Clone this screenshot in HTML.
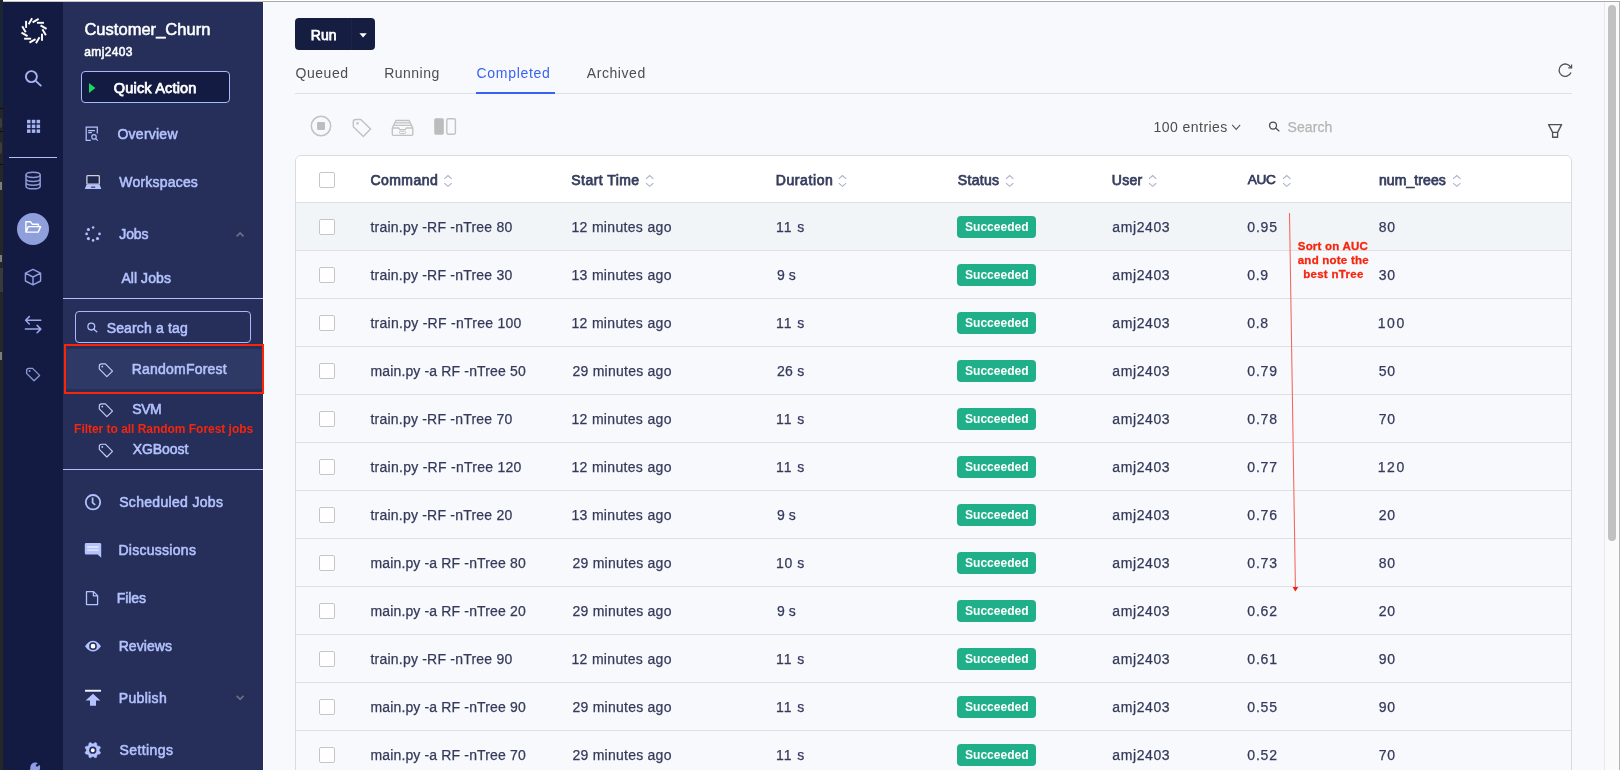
<!DOCTYPE html>
<html lang="en">
<head>
<meta charset="utf-8">
<title>Customer_Churn - Jobs</title>
<style>
html,body{margin:0;padding:0;}
body{width:1620px;height:770px;overflow:hidden;position:relative;background:#f8f9fc;font-family:"Liberation Sans",sans-serif;}
.a{position:absolute;}
.t{position:absolute;line-height:0;white-space:nowrap;}
svg{position:absolute;overflow:visible;}
#strip{left:0;top:0;width:3px;height:770px;background:#262626;}
#strip2{left:0;top:0;width:3px;height:108px;background:#1b2634;}
#rail{left:3px;top:2px;width:60px;height:768px;background:#141b42;}
#side{left:63px;top:2px;width:200px;height:768px;background:#252f5a;}
#topw{left:3px;top:0;width:1617px;height:1px;background:#ffffff;}
#topg{left:3px;top:1px;width:1617px;height:1px;background:#a9a9a9;}
.hr{background:#b1befb;height:1px;}
.row{left:296px;width:1275px;height:47px;border-bottom:1px solid #dfe0e3;}
.cb{width:14px;height:14px;border:1px solid #c6c6c6;border-radius:2px;background:#fff;left:319px;}
.badge{left:957px;width:79px;height:22px;border-radius:4px;background:#1fb089;}
</style>
</head>
<body>
<div class="a" id="strip"></div>
<div class="a" id="strip2"></div>
<div class="a" style="left:0;top:108px;width:3px;height:1px;background:#0d0d0d;"></div>
<div class="a" style="left:0;top:131px;width:3px;height:1px;background:#0d0d0d;"></div>
<div class="a" style="left:0;top:164px;width:3px;height:1px;background:#0d0d0d;"></div>
<div class="a" style="left:0;top:118px;width:2px;height:10px;background:#3c3c3c;border-radius:0 2px 2px 0;"></div>
<div class="a" style="left:0;top:142px;width:2px;height:12px;background:#3c3c3c;border-radius:0 2px 2px 0;"></div>
<div class="a" style="left:0;top:268px;width:3px;height:24px;background:#3a3a3a;"></div>
<div class="a" style="left:0;top:182px;width:2px;height:8px;background:#7d7d7d;"></div>
<div class="a" style="left:0;top:255px;width:2px;height:7px;background:#7d7d7d;"></div>
<div class="a" style="left:0;top:352px;width:2px;height:8px;background:#7d7d7d;"></div>
<div class="a" id="rail"></div>
<div class="a" id="side"></div>
<div class="a" id="topw"></div>
<div class="a" id="topg"></div>
<div class="a" style="left:3px;top:1px;width:260px;height:1px;background:#c6c4c2;"></div>
<div class="a" style="left:263px;top:2px;width:1px;height:768px;background:#ffffff;"></div>

<!-- rail -->
<div class="a hr" style="left:9px;top:157px;width:48px;"></div>
<div class="a" style="left:17px;top:213px;width:32px;height:32px;border-radius:16px;background:#8f9fdc;"></div>

<!-- sidebar -->
<div class="a" style="left:81px;top:71px;width:147px;height:30px;border:1px solid #a9b8fa;border-radius:4px;background:#141b42;"></div>
<div class="a hr" style="left:63px;top:298px;width:200px;"></div>
<div class="a" style="left:75px;top:311px;width:174px;height:30px;border:1px solid #a9b8fa;border-radius:4px;"></div>
<div class="a" style="left:66px;top:349px;width:197px;height:40px;background:#2f3966;"></div>
<div class="a" style="left:64px;top:344px;width:196px;height:46px;border:2px solid #fa2509;"></div>
<div class="a hr" style="left:63px;top:469px;width:200px;"></div>

<!-- main -->
<div class="a" style="left:295px;top:18px;width:80px;height:32px;border-radius:4px;background:#151d41;"></div>
<div class="a" style="left:295px;top:93px;width:1277px;height:1px;background:#e0e1e5;"></div>
<div class="a" style="left:476px;top:92px;width:79px;height:2px;background:#3a62f2;"></div>

<!-- table -->
<div class="a" style="left:295px;top:155px;width:1275px;height:640px;border:1px solid #dadbde;border-radius:6px 6px 0 0;background:#f8f9fc;"></div>
<div class="a" style="left:296px;top:156px;width:1275px;height:46px;border-bottom:1px solid #dfe0e3;background:#ffffff;border-radius:5px 5px 0 0;"></div>
<div class="a cb" style="top:172px;"></div>
<div class="a row" style="top:203px;background:#f2f5f8;"></div>
<div class="a cb" style="top:219px;"></div>
<div class="a badge" style="top:216px;"></div>
<div class="a row" style="top:251px;"></div>
<div class="a cb" style="top:267px;"></div>
<div class="a badge" style="top:264px;"></div>
<div class="a row" style="top:299px;"></div>
<div class="a cb" style="top:315px;"></div>
<div class="a badge" style="top:312px;"></div>
<div class="a row" style="top:347px;"></div>
<div class="a cb" style="top:363px;"></div>
<div class="a badge" style="top:360px;"></div>
<div class="a row" style="top:395px;"></div>
<div class="a cb" style="top:411px;"></div>
<div class="a badge" style="top:408px;"></div>
<div class="a row" style="top:443px;"></div>
<div class="a cb" style="top:459px;"></div>
<div class="a badge" style="top:456px;"></div>
<div class="a row" style="top:491px;"></div>
<div class="a cb" style="top:507px;"></div>
<div class="a badge" style="top:504px;"></div>
<div class="a row" style="top:539px;"></div>
<div class="a cb" style="top:555px;"></div>
<div class="a badge" style="top:552px;"></div>
<div class="a row" style="top:587px;"></div>
<div class="a cb" style="top:603px;"></div>
<div class="a badge" style="top:600px;"></div>
<div class="a row" style="top:635px;"></div>
<div class="a cb" style="top:651px;"></div>
<div class="a badge" style="top:648px;"></div>
<div class="a row" style="top:683px;"></div>
<div class="a cb" style="top:699px;"></div>
<div class="a badge" style="top:696px;"></div>
<div class="a row" style="top:731px;"></div>
<div class="a cb" style="top:747px;"></div>
<div class="a badge" style="top:744px;"></div>

<!-- scrollbar -->
<div class="a" style="left:1604px;top:2px;width:15px;height:768px;background:#fafafa;border-left:1px solid #e8e8e8;box-sizing:border-box;"></div>
<div class="a" style="left:1608px;top:5px;width:8px;height:536px;border-radius:4px;background:#c1c1c1;"></div>
<div class="a" style="left:1619px;top:1px;width:1px;height:769px;background:#b5b5b5;"></div>

<svg class="a" style="left:0;top:0" width="1620" height="770" viewBox="0 0 1620 770" ><line x1="36.95" y1="22.80" x2="43.95" y2="22.80" stroke="#fff" stroke-width="1.9"/><line x1="40.54" y1="25.32" x2="46.60" y2="28.82" stroke="#fff" stroke-width="1.9"/><line x1="42.38" y1="29.29" x2="45.88" y2="35.35" stroke="#fff" stroke-width="1.9"/><line x1="42.00" y1="33.65" x2="42.00" y2="40.65" stroke="#fff" stroke-width="1.9"/><line x1="39.48" y1="37.24" x2="35.98" y2="43.30" stroke="#fff" stroke-width="1.9"/><line x1="35.51" y1="39.08" x2="29.45" y2="42.58" stroke="#fff" stroke-width="1.9"/><line x1="31.15" y1="38.70" x2="24.15" y2="38.70" stroke="#fff" stroke-width="1.9"/><line x1="27.56" y1="36.18" x2="21.50" y2="32.68" stroke="#fff" stroke-width="1.9"/><line x1="25.72" y1="32.21" x2="22.22" y2="26.15" stroke="#fff" stroke-width="1.9"/><line x1="26.10" y1="27.85" x2="26.10" y2="20.85" stroke="#fff" stroke-width="1.9"/><line x1="28.62" y1="24.26" x2="32.12" y2="18.20" stroke="#fff" stroke-width="1.9"/><line x1="32.59" y1="22.42" x2="38.65" y2="18.92" stroke="#fff" stroke-width="1.9"/><circle cx="31.4" cy="76.6" r="5.5" fill="none" stroke="#a5b3f0" stroke-width="1.9"/><line x1="35.4" y1="80.6" x2="40.8" y2="85.6" stroke="#a5b3f0" stroke-width="1.9" stroke-linecap="round"/><rect x="27.0" y="119.8" width="3.5" height="3.5" fill="#a5b3f0"/><rect x="27.0" y="124.6" width="3.5" height="3.5" fill="#a5b3f0"/><rect x="27.0" y="129.4" width="3.5" height="3.5" fill="#a5b3f0"/><rect x="31.8" y="119.8" width="3.5" height="3.5" fill="#a5b3f0"/><rect x="31.8" y="124.6" width="3.5" height="3.5" fill="#a5b3f0"/><rect x="31.8" y="129.4" width="3.5" height="3.5" fill="#a5b3f0"/><rect x="36.6" y="119.8" width="3.5" height="3.5" fill="#a5b3f0"/><rect x="36.6" y="124.6" width="3.5" height="3.5" fill="#a5b3f0"/><rect x="36.6" y="129.4" width="3.5" height="3.5" fill="#a5b3f0"/><ellipse cx="33.1" cy="174.8" rx="7.1" ry="2.6" fill="none" stroke="#8b98d4" stroke-width="1.5"/><path d="M26,174.8 V186.2 A7.1,2.6 0 0 0 40.2,186.2 V174.8 M26,178.8 A7.1,2.6 0 0 0 40.2,178.8 M26,182.6 A7.1,2.6 0 0 0 40.2,182.6" fill="none" stroke="#8b98d4" stroke-width="1.5"/><path d="M25.9,232.1 V221.8 H30.6 L32.2,224.2 H38.4 V226.4 M25.9,232.1 L28.3,226.6 H40.6 L38.2,232.1 Z" fill="none" stroke="#fff" stroke-width="1.4" stroke-linejoin="round"/><path d="M33,269.4 L40.6,273.2 V281 L33,284.8 L25.4,281 V273.2 Z M25.4,273.2 L33,277 L40.6,273.2 M33,277 V284.8" fill="none" stroke="#909ee0" stroke-width="1.4" stroke-linejoin="round"/><path d="M40.8,320.3 H26 M29.3,316.6 L25.6,320.3 L29.3,324 M25.4,329.1 H40.4 M37.1,325.4 L40.8,329.1 L37.1,332.8" fill="none" stroke="#9aa8e8" stroke-width="1.5" stroke-linecap="round" stroke-linejoin="round"/><path d="M26.60,370.64 Q26.60,368.40 28.83,368.40 L32.59,368.40 L39.60,375.41 L34.01,380.80 L26.60,373.38 Z" fill="none" stroke="#8b98d4" stroke-width="1.3" stroke-linejoin="round"/><circle cx="29.55" cy="371.04" r="1.0" fill="#8b98d4"/><circle cx="35.2" cy="767.4" r="4.9" fill="#8f9ee6"/><line x1="33" y1="769.5" x2="26" y2="777" stroke="#8f9ee6" stroke-width="4.4"/><line x1="36.3" y1="766.2" x2="42" y2="760.8" stroke="#141b42" stroke-width="2.3"/><path d="M89,83 L95.4,88 L89,93 Z" fill="#1ed760"/><path d="M97.3,133.6 V127.2 H86.2 V140.3 H90.8 M88.2,130.5 H94.9 M88.2,132.7 H91.9" fill="none" stroke="#b4c2fd" stroke-width="1.25"/><circle cx="94" cy="136.9" r="2.2" fill="none" stroke="#b4c2fd" stroke-width="1.2"/><line x1="95.7" y1="138.6" x2="97.8" y2="140.6" stroke="#b4c2fd" stroke-width="1.2"/><rect x="86.9" y="175.6" width="12.4" height="8.6" rx="0.8" fill="#1f2850" stroke="#cfcfd4" stroke-width="1.3"/><path d="M86.6,184.6 H99.6 L101.3,189 H84.8 Z" fill="#b4c2fd"/><rect x="91" y="186.6" width="4.2" height="1.1" fill="#252f5a"/><circle cx="93.1" cy="227.5" r="1.25" fill="#b4c2fd"/><circle cx="88.4" cy="229.5" r="1.55" fill="#b4c2fd"/><circle cx="86.6" cy="233.9" r="1.35" fill="#b4c2fd"/><circle cx="88.4" cy="238.6" r="1.55" fill="#b4c2fd"/><circle cx="93.1" cy="240.4" r="1.3" fill="#b4c2fd"/><circle cx="97.5" cy="238.6" r="1.55" fill="#b4c2fd"/><circle cx="99.5" cy="233.9" r="1.3" fill="#b4c2fd"/><path d="M236.7,236.4 L240.1,233.0 L243.5,236.4" fill="none" stroke="#6f7080" stroke-width="1.7"/><path d="M236.7,695.9 L240.1,699.3 L243.5,695.9" fill="none" stroke="#6f7080" stroke-width="1.7"/><circle cx="91.3" cy="326.6" r="3.4" fill="none" stroke="#b4c2fd" stroke-width="1.3"/><line x1="93.8" y1="329.2" x2="96.8" y2="331.8" stroke="#b4c2fd" stroke-width="1.3" stroke-linecap="round"/><path d="M99.30,366.11 Q99.30,363.80 101.57,363.80 L105.38,363.80 L112.50,371.04 L106.83,376.60 L99.30,368.94 Z" fill="none" stroke="#c3cdfb" stroke-width="1.15" stroke-linejoin="round"/><circle cx="102.29" cy="366.53" r="0.9" fill="#c3cdfb"/><path d="M99.30,406.11 Q99.30,403.80 101.57,403.80 L105.38,403.80 L112.50,411.04 L106.83,416.60 L99.30,408.94 Z" fill="none" stroke="#c3cdfb" stroke-width="1.15" stroke-linejoin="round"/><circle cx="102.29" cy="406.53" r="0.9" fill="#c3cdfb"/><path d="M99.30,446.51 Q99.30,444.20 101.57,444.20 L105.38,444.20 L112.50,451.44 L106.83,457.00 L99.30,449.34 Z" fill="none" stroke="#c3cdfb" stroke-width="1.15" stroke-linejoin="round"/><circle cx="102.29" cy="446.93" r="0.9" fill="#c3cdfb"/><circle cx="93" cy="502.2" r="7.2" fill="none" stroke="#b4c2fd" stroke-width="1.8"/><path d="M92.6,497.6 V502.6 L95.2,505" fill="none" stroke="#b4c2fd" stroke-width="1.7"/><path d="M86.2,543 H99.8 Q101.2,543 101.2,544.4 V557.8 L97.6,554.6 H86.2 Q84.8,554.6 84.8,553.2 V544.4 Q84.8,543 86.2,543 Z" fill="#b4c2fd"/><path d="M87.2,547 H98.6 M87.2,550.2 H98.6" stroke="#e8ecff" stroke-width="1.3"/><path d="M86.5,591.6 H93.6 L97.6,595.6 V604.6 H86.5 Z M93.4,591.8 V595.8 H97.4" fill="none" stroke="#b4c2fd" stroke-width="1.3" stroke-linejoin="round"/><path d="M85,646.2 Q93,635.4 101,646.2 Q93,657 85,646.2 Z" fill="#b4c2fd"/><circle cx="93" cy="646.2" r="3.1" fill="#fff" stroke="#252f5a" stroke-width="1.5"/><rect x="85" y="689.8" width="16" height="1.9" fill="#f2f4ff"/><path d="M93,693.8 L100.4,700.6 H96 V705.8 H90 V700.6 H85.6 Z" fill="#b4c2fd"/><polygon points="100.46,752.52 99.86,753.97 97.75,754.26 96.86,755.15 96.57,757.26 95.12,757.86 93.43,756.57 92.17,756.57 90.48,757.86 89.03,757.26 88.74,755.15 87.85,754.26 85.74,753.97 85.14,752.52 86.43,750.83 86.43,749.57 85.14,747.88 85.74,746.43 87.85,746.14 88.74,745.25 89.03,743.14 90.48,742.54 92.17,743.83 93.43,743.83 95.12,742.54 96.57,743.14 96.86,745.25 97.75,746.14 99.86,746.43 100.46,747.88 99.17,749.57 99.17,750.83" fill="#b4c2fd" stroke="#b4c2fd" stroke-width="0.6" stroke-linejoin="round"/><circle cx="92.8" cy="750.2" r="2.8" fill="#fff" stroke="#252f5a" stroke-width="1.7"/><path d="M359.4,33.2 H366.8 L363.1,37.6 Z" fill="#fff"/><rect x="351" y="18" width="1" height="32" fill="#1a2348"/><circle cx="321" cy="126" r="9.7" fill="none" stroke="#c2c2c2" stroke-width="1.5"/><rect x="317" y="122" width="8" height="8" rx="1.2" fill="#bdbdbd"/><path d="M353.3,122 Q353.3,119.5 355.8,119.5 L360.8,119.5 L370.6,128.9 L363.3,136.4 L353.3,126.8 Z" fill="none" stroke="#c2c2c2" stroke-width="1.45" stroke-linejoin="round"/><rect x="356.3" y="122.1" width="2.4" height="2.4" fill="#c4c4c4"/><path d="M392.3,128 L395.9,120.5 H409.2 L412.8,128 V134.3 Q412.8,135.4 411.7,135.4 H393.4 Q392.3,135.4 392.3,134.3 Z M392.3,128 H398.8 L399.8,129.6 H405.3 L406.3,128 H412.8 M394.9,122.9 H410.2 M393.8,125.4 H411.3" fill="none" stroke="#c2c2c2" stroke-width="1.35" stroke-linejoin="round"/><rect x="399.4" y="131.3" width="6.3" height="2.3" rx="1.1" fill="none" stroke="#c2c2c2" stroke-width="1"/><rect x="434.2" y="118.2" width="9.6" height="16.5" rx="1.6" fill="#bcbcbc"/><rect x="446.8" y="118.8" width="8.6" height="15.4" rx="1.4" fill="none" stroke="#c2c2c2" stroke-width="1.4"/><path d="M444.3,178.8 L448.0,175.6 L451.7,178.8 M444.3,183.1 L448.0,186.3 L451.7,183.1" fill="none" stroke="#aab1cc" stroke-width="1.1"/><path d="M646.0,178.8 L649.7,175.6 L653.4,178.8 M646.0,183.1 L649.7,186.3 L653.4,183.1" fill="none" stroke="#aab1cc" stroke-width="1.1"/><path d="M838.8,178.8 L842.5,175.6 L846.2,178.8 M838.8,183.1 L842.5,186.3 L846.2,183.1" fill="none" stroke="#aab1cc" stroke-width="1.1"/><path d="M1006.0,178.8 L1009.7,175.6 L1013.4,178.8 M1006.0,183.1 L1009.7,186.3 L1013.4,183.1" fill="none" stroke="#aab1cc" stroke-width="1.1"/><path d="M1149.0,178.8 L1152.7,175.6 L1156.4,178.8 M1149.0,183.1 L1152.7,186.3 L1156.4,183.1" fill="none" stroke="#aab1cc" stroke-width="1.1"/><path d="M1283.1,178.8 L1286.8,175.6 L1290.5,178.8 M1283.1,183.1 L1286.8,186.3 L1290.5,183.1" fill="none" stroke="#aab1cc" stroke-width="1.1"/><path d="M1453.1,178.8 L1456.8,175.6 L1460.5,178.8 M1453.1,183.1 L1456.8,186.3 L1460.5,183.1" fill="none" stroke="#aab1cc" stroke-width="1.1"/><path d="M1232.2,124.8 L1236.2,129.4 L1240.2,124.8" fill="none" stroke="#555" stroke-width="1.05"/><circle cx="1273" cy="125.5" r="3.5" fill="none" stroke="#4a4a4a" stroke-width="1.25"/><line x1="1275.6" y1="128" x2="1279" y2="130.9" stroke="#4a4a4a" stroke-width="1.25" stroke-linecap="round"/><path d="M1570.8,67.4 A6.2,6.2 0 1 0 1571,72.6" fill="none" stroke="#505050" stroke-width="1.3"/><path d="M1571.6,64.6 V67.9 H1568.3" fill="none" stroke="#505050" stroke-width="1.2"/><path d="M1548.6,124.6 H1561.6 L1557.6,132.4 V137.2 H1552.6 V132.4 Z M1552.6,132.4 H1557.6" fill="none" stroke="#4f4f4f" stroke-width="1.35" stroke-linejoin="round"/><line x1="1289.5" y1="213" x2="1295.4" y2="587.5" stroke="#f66358" stroke-width="1.05"/><path d="M1292.6,587 H1298.3 L1295.4,591.6 Z" fill="#f3200a"/></svg>
<div class="a" id="tx" style="left:0;top:0;width:1620px;height:770px;will-change:transform;">
<div class="t" style="left:84.41px;top:29.28px;font-size:16.5px;letter-spacing:0.025px;color:#ffffff;-webkit-text-stroke:0.55px;">Customer_Churn</div>
<div class="t" style="left:84.31px;top:51.84px;font-size:12px;letter-spacing:0.370px;color:#ffffff;-webkit-text-stroke:0.55px;">amj2403</div>
<div class="t" style="left:113.85px;top:87.98px;font-size:14.5px;letter-spacing:0.179px;color:#ffffff;-webkit-text-stroke:0.75px;">Quick Action</div>
<div class="t" style="left:117.51px;top:134.15px;font-size:14px;letter-spacing:0.235px;color:#b4c2fd;-webkit-text-stroke:0.55px;">Overview</div>
<div class="t" style="left:119.31px;top:182.15px;font-size:14px;letter-spacing:0.201px;color:#b4c2fd;-webkit-text-stroke:0.55px;">Workspaces</div>
<div class="t" style="left:119.31px;top:234.15px;font-size:14px;letter-spacing:-0.131px;color:#b4c2fd;-webkit-text-stroke:0.55px;">Jobs</div>
<div class="t" style="left:121.41px;top:278.15px;font-size:14px;letter-spacing:0.066px;color:#b4c2fd;-webkit-text-stroke:0.55px;">All Jobs</div>
<div class="t" style="left:106.71px;top:328.15px;font-size:14px;letter-spacing:0.144px;color:#b4c2fd;-webkit-text-stroke:0.55px;">Search a tag</div>
<div class="t" style="left:131.71px;top:369.15px;font-size:14px;letter-spacing:0.216px;color:#b4c2fd;-webkit-text-stroke:0.55px;">RandomForest</div>
<div class="t" style="left:132.31px;top:409.15px;font-size:14px;letter-spacing:-0.448px;color:#b4c2fd;-webkit-text-stroke:0.55px;">SVM</div>
<div class="t" style="left:74.10px;top:428.54px;font-size:12px;letter-spacing:-0.030px;color:#f8250c;font-weight:700;">Filter to all Random Forest jobs</div>
<div class="t" style="left:132.71px;top:449.15px;font-size:14px;letter-spacing:-0.060px;color:#b4c2fd;-webkit-text-stroke:0.55px;">XGBoost</div>
<div class="t" style="left:119.21px;top:502.15px;font-size:14px;letter-spacing:0.312px;color:#b4c2fd;-webkit-text-stroke:0.55px;">Scheduled Jobs</div>
<div class="t" style="left:118.41px;top:550.15px;font-size:14px;letter-spacing:0.279px;color:#b4c2fd;-webkit-text-stroke:0.55px;">Discussions</div>
<div class="t" style="left:116.71px;top:598.15px;font-size:14px;letter-spacing:-0.045px;color:#b4c2fd;-webkit-text-stroke:0.55px;">Files</div>
<div class="t" style="left:118.71px;top:646.15px;font-size:14px;letter-spacing:0.046px;color:#b4c2fd;-webkit-text-stroke:0.55px;">Reviews</div>
<div class="t" style="left:118.71px;top:698.15px;font-size:14px;letter-spacing:0.342px;color:#b4c2fd;-webkit-text-stroke:0.55px;">Publish</div>
<div class="t" style="left:119.51px;top:750.15px;font-size:14px;letter-spacing:0.399px;color:#b4c2fd;-webkit-text-stroke:0.55px;">Settings</div>
<div class="t" style="left:310.65px;top:34.86px;font-size:13.96px;letter-spacing:0.182px;color:#ffffff;-webkit-text-stroke:0.75px;">Run</div>
<div class="t" style="left:295.50px;top:73.15px;font-size:14px;letter-spacing:0.533px;color:#4d4d4d;">Queued</div>
<div class="t" style="left:384.20px;top:73.15px;font-size:14px;letter-spacing:0.489px;color:#4d4d4d;">Running</div>
<div class="t" style="left:476.50px;top:73.15px;font-size:14px;letter-spacing:0.710px;color:#3a62f2;">Completed</div>
<div class="t" style="left:586.80px;top:73.15px;font-size:14px;letter-spacing:0.560px;color:#4d4d4d;">Archived</div>
<div class="t" style="left:1153.60px;top:127.15px;font-size:14px;letter-spacing:0.443px;color:#4d4d4d;">100 entries</div>
<div class="t" style="left:1287.55px;top:127.15px;font-size:14px;letter-spacing:0.066px;color:#b4b4b4;-webkit-text-stroke:0.25px;">Search</div>
<div class="t" style="left:370.45px;top:180.15px;font-size:14px;letter-spacing:0.451px;color:#363d5e;-webkit-text-stroke:0.75px;">Command</div>
<div class="t" style="left:571.35px;top:180.15px;font-size:14px;letter-spacing:0.438px;color:#363d5e;-webkit-text-stroke:0.75px;">Start Time</div>
<div class="t" style="left:775.75px;top:180.15px;font-size:14px;letter-spacing:0.596px;color:#363d5e;-webkit-text-stroke:0.75px;">Duration</div>
<div class="t" style="left:957.85px;top:180.15px;font-size:14px;letter-spacing:0.302px;color:#363d5e;-webkit-text-stroke:0.75px;">Status</div>
<div class="t" style="left:1111.85px;top:180.15px;font-size:14px;letter-spacing:0.268px;color:#363d5e;-webkit-text-stroke:0.75px;">User</div>
<div class="t" style="left:1247.85px;top:180.28px;font-size:13.62px;letter-spacing:-0.353px;color:#363d5e;-webkit-text-stroke:0.75px;">AUC</div>
<div class="t" style="left:1378.95px;top:180.15px;font-size:14px;letter-spacing:0.094px;color:#363d5e;-webkit-text-stroke:0.75px;">num_trees</div>
<div class="t" style="left:370.45px;top:227.15px;font-size:14px;letter-spacing:0.219px;color:#343a5a;-webkit-text-stroke:0.25px;">train.py -RF -nTree 80</div>
<div class="t" style="left:571.45px;top:227.15px;font-size:14px;letter-spacing:0.327px;color:#343a5a;-webkit-text-stroke:0.25px;">12 minutes ago</div>
<div class="t" style="left:776.05px;top:227.15px;font-size:14px;letter-spacing:0.959px;color:#343a5a;-webkit-text-stroke:0.25px;">11 s</div>
<div class="t" style="left:965.00px;top:226.84px;font-size:12px;letter-spacing:0.033px;color:#ffffff;font-weight:700;">Succeeded</div>
<div class="t" style="left:1112.35px;top:227.15px;font-size:14px;letter-spacing:0.597px;color:#343a5a;-webkit-text-stroke:0.25px;">amj2403</div>
<div class="t" style="left:1247.35px;top:227.15px;font-size:14px;letter-spacing:0.779px;color:#343a5a;-webkit-text-stroke:0.25px;">0.95</div>
<div class="t" style="left:1378.75px;top:227.15px;font-size:14px;letter-spacing:0.814px;color:#343a5a;-webkit-text-stroke:0.25px;">80</div>
<div class="t" style="left:370.45px;top:275.15px;font-size:14px;letter-spacing:0.219px;color:#343a5a;-webkit-text-stroke:0.25px;">train.py -RF -nTree 30</div>
<div class="t" style="left:571.45px;top:275.15px;font-size:14px;letter-spacing:0.327px;color:#343a5a;-webkit-text-stroke:0.25px;">13 minutes ago</div>
<div class="t" style="left:777.05px;top:275.15px;font-size:14px;letter-spacing:0.012px;color:#343a5a;-webkit-text-stroke:0.25px;">9 s</div>
<div class="t" style="left:965.00px;top:274.84px;font-size:12px;letter-spacing:0.033px;color:#ffffff;font-weight:700;">Succeeded</div>
<div class="t" style="left:1112.35px;top:275.15px;font-size:14px;letter-spacing:0.597px;color:#343a5a;-webkit-text-stroke:0.25px;">amj2403</div>
<div class="t" style="left:1247.35px;top:275.15px;font-size:14px;letter-spacing:0.612px;color:#343a5a;-webkit-text-stroke:0.25px;">0.9</div>
<div class="t" style="left:1378.75px;top:275.15px;font-size:14px;letter-spacing:0.814px;color:#343a5a;-webkit-text-stroke:0.25px;">30</div>
<div class="t" style="left:370.45px;top:323.15px;font-size:14px;letter-spacing:0.269px;color:#343a5a;-webkit-text-stroke:0.25px;">train.py -RF -nTree 100</div>
<div class="t" style="left:571.45px;top:323.15px;font-size:14px;letter-spacing:0.327px;color:#343a5a;-webkit-text-stroke:0.25px;">12 minutes ago</div>
<div class="t" style="left:776.05px;top:323.15px;font-size:14px;letter-spacing:0.959px;color:#343a5a;-webkit-text-stroke:0.25px;">11 s</div>
<div class="t" style="left:965.00px;top:322.84px;font-size:12px;letter-spacing:0.033px;color:#ffffff;font-weight:700;">Succeeded</div>
<div class="t" style="left:1112.35px;top:323.15px;font-size:14px;letter-spacing:0.597px;color:#343a5a;-webkit-text-stroke:0.25px;">amj2403</div>
<div class="t" style="left:1247.35px;top:323.15px;font-size:14px;letter-spacing:0.612px;color:#343a5a;-webkit-text-stroke:0.25px;">0.8</div>
<div class="t" style="left:1377.75px;top:323.15px;font-size:14px;letter-spacing:1.564px;color:#343a5a;-webkit-text-stroke:0.25px;">100</div>
<div class="t" style="left:370.45px;top:371.15px;font-size:14px;letter-spacing:0.150px;color:#343a5a;-webkit-text-stroke:0.25px;">main.py -a RF -nTree 50</div>
<div class="t" style="left:572.45px;top:371.15px;font-size:14px;letter-spacing:0.250px;color:#343a5a;-webkit-text-stroke:0.25px;">29 minutes ago</div>
<div class="t" style="left:777.05px;top:371.15px;font-size:14px;letter-spacing:0.279px;color:#343a5a;-webkit-text-stroke:0.25px;">26 s</div>
<div class="t" style="left:965.00px;top:370.84px;font-size:12px;letter-spacing:0.033px;color:#ffffff;font-weight:700;">Succeeded</div>
<div class="t" style="left:1112.35px;top:371.15px;font-size:14px;letter-spacing:0.597px;color:#343a5a;-webkit-text-stroke:0.25px;">amj2403</div>
<div class="t" style="left:1247.35px;top:371.15px;font-size:14px;letter-spacing:0.779px;color:#343a5a;-webkit-text-stroke:0.25px;">0.79</div>
<div class="t" style="left:1378.75px;top:371.15px;font-size:14px;letter-spacing:0.814px;color:#343a5a;-webkit-text-stroke:0.25px;">50</div>
<div class="t" style="left:370.45px;top:419.15px;font-size:14px;letter-spacing:0.219px;color:#343a5a;-webkit-text-stroke:0.25px;">train.py -RF -nTree 70</div>
<div class="t" style="left:571.45px;top:419.15px;font-size:14px;letter-spacing:0.327px;color:#343a5a;-webkit-text-stroke:0.25px;">12 minutes ago</div>
<div class="t" style="left:776.05px;top:419.15px;font-size:14px;letter-spacing:0.959px;color:#343a5a;-webkit-text-stroke:0.25px;">11 s</div>
<div class="t" style="left:965.00px;top:418.84px;font-size:12px;letter-spacing:0.033px;color:#ffffff;font-weight:700;">Succeeded</div>
<div class="t" style="left:1112.35px;top:419.15px;font-size:14px;letter-spacing:0.597px;color:#343a5a;-webkit-text-stroke:0.25px;">amj2403</div>
<div class="t" style="left:1247.35px;top:419.15px;font-size:14px;letter-spacing:0.779px;color:#343a5a;-webkit-text-stroke:0.25px;">0.78</div>
<div class="t" style="left:1378.75px;top:419.15px;font-size:14px;letter-spacing:0.814px;color:#343a5a;-webkit-text-stroke:0.25px;">70</div>
<div class="t" style="left:370.45px;top:467.15px;font-size:14px;letter-spacing:0.269px;color:#343a5a;-webkit-text-stroke:0.25px;">train.py -RF -nTree 120</div>
<div class="t" style="left:571.45px;top:467.15px;font-size:14px;letter-spacing:0.327px;color:#343a5a;-webkit-text-stroke:0.25px;">12 minutes ago</div>
<div class="t" style="left:776.05px;top:467.15px;font-size:14px;letter-spacing:0.959px;color:#343a5a;-webkit-text-stroke:0.25px;">11 s</div>
<div class="t" style="left:965.00px;top:466.84px;font-size:12px;letter-spacing:0.033px;color:#ffffff;font-weight:700;">Succeeded</div>
<div class="t" style="left:1112.35px;top:467.15px;font-size:14px;letter-spacing:0.597px;color:#343a5a;-webkit-text-stroke:0.25px;">amj2403</div>
<div class="t" style="left:1247.35px;top:467.15px;font-size:14px;letter-spacing:0.779px;color:#343a5a;-webkit-text-stroke:0.25px;">0.77</div>
<div class="t" style="left:1377.75px;top:467.15px;font-size:14px;letter-spacing:1.564px;color:#343a5a;-webkit-text-stroke:0.25px;">120</div>
<div class="t" style="left:370.45px;top:515.15px;font-size:14px;letter-spacing:0.219px;color:#343a5a;-webkit-text-stroke:0.25px;">train.py -RF -nTree 20</div>
<div class="t" style="left:571.45px;top:515.15px;font-size:14px;letter-spacing:0.327px;color:#343a5a;-webkit-text-stroke:0.25px;">13 minutes ago</div>
<div class="t" style="left:777.05px;top:515.15px;font-size:14px;letter-spacing:0.012px;color:#343a5a;-webkit-text-stroke:0.25px;">9 s</div>
<div class="t" style="left:965.00px;top:514.84px;font-size:12px;letter-spacing:0.033px;color:#ffffff;font-weight:700;">Succeeded</div>
<div class="t" style="left:1112.35px;top:515.15px;font-size:14px;letter-spacing:0.597px;color:#343a5a;-webkit-text-stroke:0.25px;">amj2403</div>
<div class="t" style="left:1247.35px;top:515.15px;font-size:14px;letter-spacing:0.779px;color:#343a5a;-webkit-text-stroke:0.25px;">0.76</div>
<div class="t" style="left:1378.75px;top:515.15px;font-size:14px;letter-spacing:0.814px;color:#343a5a;-webkit-text-stroke:0.25px;">20</div>
<div class="t" style="left:370.45px;top:563.15px;font-size:14px;letter-spacing:0.150px;color:#343a5a;-webkit-text-stroke:0.25px;">main.py -a RF -nTree 80</div>
<div class="t" style="left:572.45px;top:563.15px;font-size:14px;letter-spacing:0.250px;color:#343a5a;-webkit-text-stroke:0.25px;">29 minutes ago</div>
<div class="t" style="left:776.05px;top:563.15px;font-size:14px;letter-spacing:0.613px;color:#343a5a;-webkit-text-stroke:0.25px;">10 s</div>
<div class="t" style="left:965.00px;top:562.84px;font-size:12px;letter-spacing:0.033px;color:#ffffff;font-weight:700;">Succeeded</div>
<div class="t" style="left:1112.35px;top:563.15px;font-size:14px;letter-spacing:0.597px;color:#343a5a;-webkit-text-stroke:0.25px;">amj2403</div>
<div class="t" style="left:1247.35px;top:563.15px;font-size:14px;letter-spacing:0.779px;color:#343a5a;-webkit-text-stroke:0.25px;">0.73</div>
<div class="t" style="left:1378.75px;top:563.15px;font-size:14px;letter-spacing:0.814px;color:#343a5a;-webkit-text-stroke:0.25px;">80</div>
<div class="t" style="left:370.45px;top:611.15px;font-size:14px;letter-spacing:0.150px;color:#343a5a;-webkit-text-stroke:0.25px;">main.py -a RF -nTree 20</div>
<div class="t" style="left:572.45px;top:611.15px;font-size:14px;letter-spacing:0.250px;color:#343a5a;-webkit-text-stroke:0.25px;">29 minutes ago</div>
<div class="t" style="left:777.05px;top:611.15px;font-size:14px;letter-spacing:0.012px;color:#343a5a;-webkit-text-stroke:0.25px;">9 s</div>
<div class="t" style="left:965.00px;top:610.84px;font-size:12px;letter-spacing:0.033px;color:#ffffff;font-weight:700;">Succeeded</div>
<div class="t" style="left:1112.35px;top:611.15px;font-size:14px;letter-spacing:0.597px;color:#343a5a;-webkit-text-stroke:0.25px;">amj2403</div>
<div class="t" style="left:1247.35px;top:611.15px;font-size:14px;letter-spacing:0.779px;color:#343a5a;-webkit-text-stroke:0.25px;">0.62</div>
<div class="t" style="left:1378.75px;top:611.15px;font-size:14px;letter-spacing:0.814px;color:#343a5a;-webkit-text-stroke:0.25px;">20</div>
<div class="t" style="left:370.45px;top:659.15px;font-size:14px;letter-spacing:0.219px;color:#343a5a;-webkit-text-stroke:0.25px;">train.py -RF -nTree 90</div>
<div class="t" style="left:571.45px;top:659.15px;font-size:14px;letter-spacing:0.327px;color:#343a5a;-webkit-text-stroke:0.25px;">12 minutes ago</div>
<div class="t" style="left:776.05px;top:659.15px;font-size:14px;letter-spacing:0.959px;color:#343a5a;-webkit-text-stroke:0.25px;">11 s</div>
<div class="t" style="left:965.00px;top:658.84px;font-size:12px;letter-spacing:0.033px;color:#ffffff;font-weight:700;">Succeeded</div>
<div class="t" style="left:1112.35px;top:659.15px;font-size:14px;letter-spacing:0.597px;color:#343a5a;-webkit-text-stroke:0.25px;">amj2403</div>
<div class="t" style="left:1247.35px;top:659.15px;font-size:14px;letter-spacing:0.779px;color:#343a5a;-webkit-text-stroke:0.25px;">0.61</div>
<div class="t" style="left:1378.75px;top:659.15px;font-size:14px;letter-spacing:0.814px;color:#343a5a;-webkit-text-stroke:0.25px;">90</div>
<div class="t" style="left:370.45px;top:707.15px;font-size:14px;letter-spacing:0.150px;color:#343a5a;-webkit-text-stroke:0.25px;">main.py -a RF -nTree 90</div>
<div class="t" style="left:572.45px;top:707.15px;font-size:14px;letter-spacing:0.250px;color:#343a5a;-webkit-text-stroke:0.25px;">29 minutes ago</div>
<div class="t" style="left:776.05px;top:707.15px;font-size:14px;letter-spacing:0.959px;color:#343a5a;-webkit-text-stroke:0.25px;">11 s</div>
<div class="t" style="left:965.00px;top:706.84px;font-size:12px;letter-spacing:0.033px;color:#ffffff;font-weight:700;">Succeeded</div>
<div class="t" style="left:1112.35px;top:707.15px;font-size:14px;letter-spacing:0.597px;color:#343a5a;-webkit-text-stroke:0.25px;">amj2403</div>
<div class="t" style="left:1247.35px;top:707.15px;font-size:14px;letter-spacing:0.779px;color:#343a5a;-webkit-text-stroke:0.25px;">0.55</div>
<div class="t" style="left:1378.75px;top:707.15px;font-size:14px;letter-spacing:0.814px;color:#343a5a;-webkit-text-stroke:0.25px;">90</div>
<div class="t" style="left:370.45px;top:755.15px;font-size:14px;letter-spacing:0.150px;color:#343a5a;-webkit-text-stroke:0.25px;">main.py -a RF -nTree 70</div>
<div class="t" style="left:572.45px;top:755.15px;font-size:14px;letter-spacing:0.250px;color:#343a5a;-webkit-text-stroke:0.25px;">29 minutes ago</div>
<div class="t" style="left:776.05px;top:755.15px;font-size:14px;letter-spacing:0.959px;color:#343a5a;-webkit-text-stroke:0.25px;">11 s</div>
<div class="t" style="left:965.00px;top:754.84px;font-size:12px;letter-spacing:0.033px;color:#ffffff;font-weight:700;">Succeeded</div>
<div class="t" style="left:1112.35px;top:755.15px;font-size:14px;letter-spacing:0.597px;color:#343a5a;-webkit-text-stroke:0.25px;">amj2403</div>
<div class="t" style="left:1247.35px;top:755.15px;font-size:14px;letter-spacing:0.779px;color:#343a5a;-webkit-text-stroke:0.25px;">0.52</div>
<div class="t" style="left:1378.75px;top:755.15px;font-size:14px;letter-spacing:0.814px;color:#343a5a;-webkit-text-stroke:0.25px;">70</div>
<div class="t" style="left:1297.76px;top:246.32px;font-size:11.5px;letter-spacing:0.213px;color:#f5260f;font-weight:700;-webkit-text-stroke:0.3px;">Sort on AUC</div>
<div class="t" style="left:1297.76px;top:260.42px;font-size:11.5px;letter-spacing:0.229px;color:#f5260f;font-weight:700;-webkit-text-stroke:0.3px;">and note the</div>
<div class="t" style="left:1303.16px;top:274.42px;font-size:11.5px;letter-spacing:0.295px;color:#f5260f;font-weight:700;-webkit-text-stroke:0.3px;">best nTree</div>
</div>
</body>
</html>
